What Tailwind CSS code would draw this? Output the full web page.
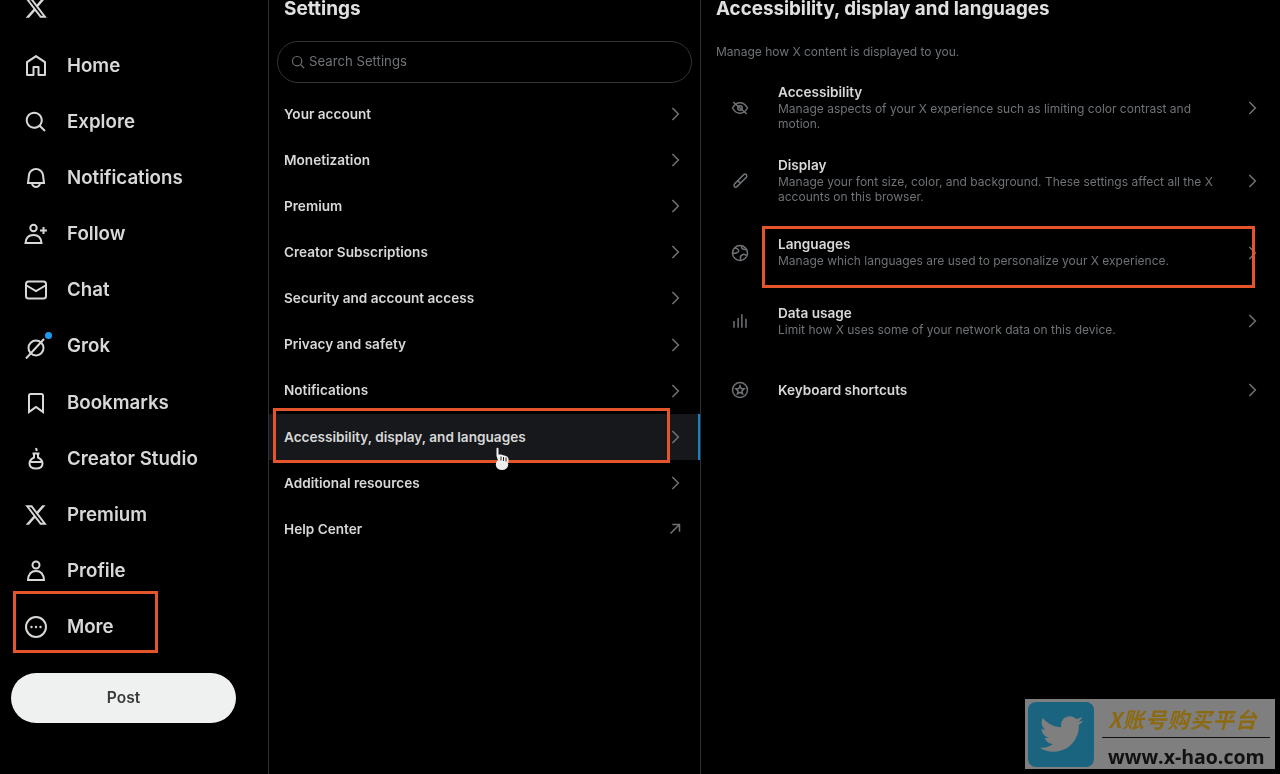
<!DOCTYPE html>
<html lang="en">
<head>
    <meta charset="UTF-8">
    <meta name="viewport" content="width=device-width, initial-scale=1.0">
    <title>Settings / X</title>
    <script src="https://cdn.jsdelivr.net/npm/@tailwindcss/browser@4"></script>
</head>
<body class="bg-black">
    <div class="relative flex h-[774px] w-[1280px] overflow-hidden bg-black font-['Inter','Liberation_Sans',sans-serif] text-[#d8d8d8]">

        <!-- left nav -->
        <aside class="flex w-[269px] shrink-0 flex-col border-r border-[#2f3336] pl-6 blur-[0.4px]">
            <div class="flex h-[38px] items-start">
                <svg class="-mt-[4px] h-6 w-6 fill-[#d8d8d8]" viewBox="0 0 24 24"><path d="M18.244 2.25h3.308l-7.227 8.26 8.502 11.24H16.17l-5.214-6.817L4.99 21.75H1.68l7.73-8.835L1.254 2.25H8.08l4.713 6.231zm-1.161 17.52h1.833L7.084 4.126H5.117z"/></svg>
            </div>
            <nav class="flex flex-col text-[18.7px] font-semibold">
                <a class="flex h-[56.1px] items-center gap-[19px]">
                    <svg class="h-6 w-6 fill-[#d8d8d8]" viewBox="0 0 24 24"><path d="M21.591 7.146L12.52 1.157c-.316-.21-.724-.21-1.04 0l-9.071 5.99c-.26.173-.409.456-.409.757v13.183c0 .502.418.913.929.913h6.638c.511 0 .929-.41.929-.913v-7.075h3.008v7.075c0 .502.418.913.929.913h6.639c.51 0 .928-.41.928-.913V7.904c0-.301-.158-.584-.408-.758zM20 20l-4.5.01.011-7.097c0-.502-.418-.913-.928-.913H9.44c-.511 0-.929.41-.929.913L8.5 20H4V8.773l8.011-5.342L20 8.773V20z"/></svg>
                    <span>Home</span>
                </a>
                <a class="flex h-[56.1px] items-center gap-[19px]">
                    <svg class="h-6 w-6 fill-[#d8d8d8]" viewBox="0 0 24 24"><path d="M10.25 3.75c-3.59 0-6.5 2.91-6.5 6.5s2.91 6.5 6.5 6.5c1.795 0 3.419-.726 4.596-1.904 1.178-1.177 1.904-2.801 1.904-4.596 0-3.59-2.91-6.5-6.5-6.5zm-8.5 6.5c0-4.694 3.806-8.5 8.5-8.5s8.5 3.806 8.5 8.5c0 1.986-.682 3.815-1.824 5.262l4.781 4.781-1.414 1.414-4.781-4.781c-1.447 1.142-3.276 1.824-5.262 1.824-4.694 0-8.5-3.806-8.5-8.5z"/></svg>
                    <span>Explore</span>
                </a>
                <a class="flex h-[56.1px] items-center gap-[19px]">
                    <svg class="h-6 w-6 fill-[#d8d8d8]" viewBox="0 0 24 24"><path d="M19.993 9.042C19.48 5.017 16.054 2 11.996 2s-7.49 3.021-7.999 7.051L2.866 18H7.1c.463 2.282 2.481 4 4.9 4s4.437-1.718 4.9-4h4.236l-1.143-8.958zM12 20c-1.306 0-2.417-.835-2.829-2h5.658c-.412 1.165-1.523 2-2.829 2zm-6.866-4l.847-6.698C6.364 6.272 8.941 4 11.996 4s5.627 2.268 6.013 5.295L18.864 16H5.134z"/></svg>
                    <span>Notifications</span>
                </a>
                <a class="flex h-[56.1px] items-center gap-[19px]">
                    <svg class="h-6 w-6 fill-none stroke-[#d8d8d8] stroke-2" viewBox="0 0 24 24"><circle cx="9.5" cy="6" r="3.2"/><path d="M1.5 21c.4-5 3.4-8 8-8s7.6 3 8 8z"/><path d="M19.5 5v7M16 8.5h7"/></svg>
                    <span>Follow</span>
                </a>
                <a class="flex h-[56.1px] items-center gap-[19px]">
                    <svg class="h-6 w-6 fill-none stroke-[#d8d8d8] stroke-2" viewBox="0 0 24 24"><rect x="2" y="3.5" width="20" height="17" rx="2.5"/><path d="M2.5 7.5L12 13l9.500-5.500"/></svg>
                    <span>Chat</span>
                </a>
                <a class="flex h-[56.1px] items-center gap-[19px]">
                    <span class="relative h-6 w-6">
                        <svg class="h-6 w-6 fill-none stroke-[#d8d8d8] stroke-2" viewBox="0 0 24 24"><circle cx="12" cy="13" r="7.500"/><path d="M2 23.500L20 4"/></svg>
                        <span class="absolute -top-[3px] left-[21px] h-[7px] w-[7px] rounded-full bg-[#1d9bf0]"></span>
                    </span>
                    <span>Grok</span>
                </a>
                <a class="flex h-[56.1px] items-center gap-[19px]">
                    <svg class="h-6 w-6 fill-[#d8d8d8]" viewBox="0 0 24 24"><path d="M4 4.500C4 3.120 5.119 2 6.500 2h11C18.881 2 20 3.120 20 4.500v18.440l-8-5.710-8 5.710V4.500zM6.500 4c-.276 0-.5.220-.5.500v14.560l6-4.290 6 4.290V4.500c0-.280-.224-.500-.500-.500h-11z"/></svg>
                    <span>Bookmarks</span>
                </a>
                <a class="flex h-[56.1px] items-center gap-[19px]">
                    <svg class="h-6 w-6 fill-none stroke-[#d8d8d8] stroke-2" viewBox="0 0 24 24"><path d="M8.500 6.500h7M10 6.500v4c-3 1.500-4.500 3.500-4.500 6 0 3.500 2.500 5 6.500 5s6.500-1.500 6.500-5c0-2.500-1.500-4.500-4.500-6v-4"/><path d="M6 15h12"/><path d="M12 1l.8 3"/></svg>
                    <span>Creator Studio</span>
                </a>
                <a class="flex h-[56.1px] items-center gap-[19px]">
                    <svg class="h-6 w-6 fill-[#d8d8d8]" viewBox="0 0 24 24"><path d="M18.244 2.250h3.308l-7.227 8.260 8.502 11.240H16.170l-5.214-6.817L4.990 21.750H1.680l7.730-8.835L1.254 2.250H8.080l4.713 6.231zm-1.161 17.520h1.833L7.084 4.126H5.117z"/></svg>
                    <span>Premium</span>
                </a>
                <a class="flex h-[56.1px] items-center gap-[19px]">
                    <svg class="h-6 w-6 fill-none stroke-[#d8d8d8] stroke-2" viewBox="0 0 24 24"><circle cx="12" cy="6" r="3.500"/><path d="M4 21c.4-5.500 3.400-9 8-9s7.600 3.500 8 9z"/></svg>
                    <span>Profile</span>
                </a>
                <a class="flex h-[56.1px] items-center gap-[19px]">
                    <svg class="h-6 w-6 fill-none stroke-[#d8d8d8] stroke-2" viewBox="0 0 24 24"><circle cx="12" cy="12" r="10"/><circle class="fill-[#d8d8d8] stroke-0" cx="7.500" cy="12" r="1.200"/><circle class="fill-[#d8d8d8] stroke-0" cx="12" cy="12" r="1.200"/><circle class="fill-[#d8d8d8] stroke-0" cx="16.500" cy="12" r="1.200"/></svg>
                    <span>More</span>
                </a>
            </nav>
            <button class="mt-[18px] -ml-[13px] flex h-[50px] w-[225px] items-center justify-center rounded-full bg-[#eff1f1] text-[15.5px] font-semibold text-[#3a3a3a]">Post</button>
        </aside>

        <!-- settings list -->
        <section class="flex w-[432px] shrink-0 flex-col border-r border-[#2f3336] blur-[0.4px]">
            <h1 class="-mt-[3px] h-6 pl-[15px] text-[19px] leading-6 font-bold text-[#e0e0e0]">Settings</h1>
            <div class="mt-5 ml-2 flex h-[42px] w-[415px] items-center gap-[4px] rounded-full border border-[#2f3336] pl-[13px] text-[13.2px] text-[#6f7377]">
                <svg class="h-[14px] w-[14px] fill-none stroke-[#6f7377] stroke-2" viewBox="0 0 24 24"><circle cx="10.500" cy="10.500" r="8"/><path d="M16.500 16.500l6 6"/></svg>
                <span>Search Settings</span>
            </div>
            <ul class="mt-2 flex flex-col text-[13.6px] font-semibold">
                <li class="flex h-[46.1px] items-center justify-between pr-[16px] pl-[15px]">
                    <span>Your account</span>
                    <svg class="h-[18px] w-[18px] fill-none stroke-[#6f7377] stroke-2" viewBox="0 0 24 24"><path d="M8.500 4l8 8-8 8"/></svg>
                </li>
                <li class="flex h-[46.1px] items-center justify-between pr-[16px] pl-[15px]">
                    <span>Monetization</span>
                    <svg class="h-[18px] w-[18px] fill-none stroke-[#6f7377] stroke-2" viewBox="0 0 24 24"><path d="M8.500 4l8 8-8 8"/></svg>
                </li>
                <li class="flex h-[46.1px] items-center justify-between pr-[16px] pl-[15px]">
                    <span>Premium</span>
                    <svg class="h-[18px] w-[18px] fill-none stroke-[#6f7377] stroke-2" viewBox="0 0 24 24"><path d="M8.500 4l8 8-8 8"/></svg>
                </li>
                <li class="flex h-[46.1px] items-center justify-between pr-[16px] pl-[15px]">
                    <span>Creator Subscriptions</span>
                    <svg class="h-[18px] w-[18px] fill-none stroke-[#6f7377] stroke-2" viewBox="0 0 24 24"><path d="M8.500 4l8 8-8 8"/></svg>
                </li>
                <li class="flex h-[46.1px] items-center justify-between pr-[16px] pl-[15px]">
                    <span>Security and account access</span>
                    <svg class="h-[18px] w-[18px] fill-none stroke-[#6f7377] stroke-2" viewBox="0 0 24 24"><path d="M8.500 4l8 8-8 8"/></svg>
                </li>
                <li class="flex h-[46.1px] items-center justify-between pr-[16px] pl-[15px]">
                    <span>Privacy and safety</span>
                    <svg class="h-[18px] w-[18px] fill-none stroke-[#6f7377] stroke-2" viewBox="0 0 24 24"><path d="M8.500 4l8 8-8 8"/></svg>
                </li>
                <li class="flex h-[46.1px] items-center justify-between pr-[16px] pl-[15px]">
                    <span>Notifications</span>
                    <svg class="h-[18px] w-[18px] fill-none stroke-[#6f7377] stroke-2" viewBox="0 0 24 24"><path d="M8.500 4l8 8-8 8"/></svg>
                </li>
                <li class="flex h-[46.1px] items-center justify-between border-r-2 border-[#1d7fc4] bg-[#16181c] pr-[14px] pl-[15px]">
                    <span>Accessibility, display, and languages</span>
                    <svg class="h-[18px] w-[18px] fill-none stroke-[#6f7377] stroke-2" viewBox="0 0 24 24"><path d="M8.500 4l8 8-8 8"/></svg>
                </li>
                <li class="flex h-[46.1px] items-center justify-between pr-[16px] pl-[15px]">
                    <span>Additional resources</span>
                    <svg class="h-[18px] w-[18px] fill-none stroke-[#6f7377] stroke-2" viewBox="0 0 24 24"><path d="M8.500 4l8 8-8 8"/></svg>
                </li>
                <li class="flex h-[46.1px] items-center justify-between pr-[16px] pl-[15px]">
                    <span>Help Center</span>
                    <svg class="h-[18px] w-[18px] fill-none stroke-[#6f7377] stroke-2" viewBox="0 0 24 24"><path d="M6 18L18 6M8.500 6H18v9.500"/></svg>
                </li>
            </ul>
        </section>

        <!-- detail pane -->
        <section class="flex flex-1 flex-col blur-[0.4px]">
            <h2 class="-mt-[3px] h-6 pl-[15px] text-[18.8px] leading-6 font-bold text-[#e0e0e0]">Accessibility, display and languages</h2>
            <p class="mt-[23px] h-4 pl-[15px] text-[12px] leading-4 text-[#6f7377]">Manage how X content is displayed to you.</p>
            <div class="mt-[12px] flex flex-col">
                <div class="flex h-[72px] items-center pr-[19px] pl-[30px]">
                    <svg class="h-[18px] w-[18px] shrink-0 fill-none stroke-[#6f7377] stroke-2" viewBox="0 0 24 24"><path d="M2 12c2.500-4.500 6-7 10-7s7.500 2.500 10 7c-2.500 4.500-6 7-10 7s-7.500-2.500-10-7z"/><circle cx="12" cy="12" r="3"/><path d="M3 4l18 16"/></svg>
                    <div class="ml-[29px] flex-1 pb-[2px]">
                        <div class="text-[13.6px] leading-[18px] font-semibold">Accessibility</div>
                        <div class="w-[440px] text-[12px] leading-[15px] text-[#6f7377]">Manage aspects of your X experience such as limiting color contrast and motion.</div>
                    </div>
                    <svg class="h-[18px] w-[18px] shrink-0 fill-none stroke-[#6f7377] stroke-2" viewBox="0 0 24 24"><path d="M8.500 4l8 8-8 8"/></svg>
                </div>
                <div class="flex h-[74px] items-center pr-[19px] pl-[30px]">
                    <svg class="h-[18px] w-[18px] shrink-0 fill-none stroke-[#6f7377] stroke-2" viewBox="0 0 24 24"><path d="M20.500 3.500c-1-1-2.500-1-3.500 0L5 15.500c-1 1-1 3-.5 4s2.500 1 3.500 0l12.500-12.500c1-1 .5-2.500 0-3.500z"/><path d="M9 11.500l3.500 3.500"/></svg>
                    <div class="ml-[29px] flex-1 pb-[2px]">
                        <div class="text-[13.6px] leading-[18px] font-semibold">Display</div>
                        <div class="w-[440px] text-[12px] leading-[15px] text-[#6f7377]">Manage your font size, color, and background. These settings affect all the X accounts on this browser.</div>
                    </div>
                    <svg class="h-[18px] w-[18px] shrink-0 fill-none stroke-[#6f7377] stroke-2" viewBox="0 0 24 24"><path d="M8.500 4l8 8-8 8"/></svg>
                </div>
                <div class="flex h-[70px] items-center pr-[19px] pl-[30px]">
                    <svg class="h-[18px] w-[18px] shrink-0 fill-none stroke-[#6f7377] stroke-2" viewBox="0 0 24 24"><circle cx="12" cy="12" r="10"/><path d="M5 5c2 1 4 1 5 3s-1 3-3 4-3 0-5 0M14 3c0 3 1 4 3 4s3 0 4 1M13 21c-1-3 0-6 3-7s3 1 5 1"/></svg>
                    <div class="ml-[29px] flex-1 pb-[3px]">
                        <div class="text-[13.6px] leading-[18px] font-semibold">Languages</div>
                        <div class="text-[12px] leading-[15px] text-[#6f7377]">Manage which languages are used to personalize your X experience.</div>
                    </div>
                    <svg class="h-[18px] w-[18px] shrink-0 fill-none stroke-[#6f7377] stroke-2" viewBox="0 0 24 24"><path d="M8.500 4l8 8-8 8"/></svg>
                </div>
                <div class="flex h-[66px] items-center pr-[19px] pl-[30px]">
                    <svg class="h-[18px] w-[18px] shrink-0 fill-none stroke-[#6f7377] stroke-2" viewBox="0 0 24 24"><path d="M4 12v9M9.500 8v13M14.500 3v18M20 9v12"/></svg>
                    <div class="ml-[29px] flex-1 pb-[1px]">
                        <div class="text-[13.6px] leading-[18px] font-semibold">Data usage</div>
                        <div class="text-[12px] leading-[15px] text-[#6f7377]">Limit how X uses some of your network data on this device.</div>
                    </div>
                    <svg class="h-[18px] w-[18px] shrink-0 fill-none stroke-[#6f7377] stroke-2" viewBox="0 0 24 24"><path d="M8.500 4l8 8-8 8"/></svg>
                </div>
                <div class="flex h-[72px] items-center pr-[19px] pl-[30px]">
                    <svg class="h-[18px] w-[18px] shrink-0 fill-none stroke-[#6f7377] stroke-2" viewBox="0 0 24 24"><circle cx="12" cy="12" r="10"/><path d="M12 6.500l1.600 3.600 3.900.400-2.900 2.600.800 3.900-3.400-2-3.400 2 .800-3.900-2.900-2.600 3.900-.400z"/></svg>
                    <div class="ml-[29px] flex-1 text-[13.6px] font-semibold">Keyboard shortcuts</div>
                    <svg class="h-[18px] w-[18px] shrink-0 fill-none stroke-[#6f7377] stroke-2" viewBox="0 0 24 24"><path d="M8.500 4l8 8-8 8"/></svg>
                </div>
            </div>
        </section>

        <!-- annotation boxes -->
        <div class="absolute top-[591px] left-[13px] h-[62px] w-[145px] border-[3px] border-[#e5552b]"></div>
        <div class="absolute top-[408px] left-[273px] h-[55px] w-[397px] border-[3px] border-[#e5552b]"></div>
        <div class="absolute top-[226px] left-[762px] h-[62px] w-[493px] border-[3px] border-[#e5552b]"></div>

        <!-- hand cursor -->
        <svg class="absolute top-[447px] left-[494px] h-[24px] w-[16px]" viewBox="0 0 16 24"><ellipse cx="8" cy="17.500" rx="6.200" ry="5.500" fill="#ececec"/><path d="M2.500 1.500C2.500.5 4.500.5 4.500 1.500V7.500L7 7.500 9.500 8.200 12 9c1.500.6 2.500 1.500 2.500 3v3.500H5L3.500 12 2.500 9z" fill="#f2f2f2"/><path d="M7 9.500v4M9.500 10v4M12 10.500v4" stroke="#222" stroke-width="1"/></svg>

        <!-- watermark -->
        <div class="absolute top-[699px] left-[1025px] flex h-[70px] w-[250px] items-center gap-[8px] bg-[#7f7f7f] pl-[3px] blur-[0.4px]">
            <div class="flex h-[65px] w-[66px] shrink-0 items-center justify-center rounded-[8px] bg-[#1a6480]">
                <svg class="h-[46px] w-[46px] fill-[#7f7f7f]" viewBox="0 0 24 24"><path d="M23.643 4.937c-.835.370-1.732.620-2.675.733.962-.576 1.700-1.490 2.048-2.578-.900.534-1.897.922-2.958 1.130-.850-.904-2.060-1.470-3.400-1.470-2.572 0-4.658 2.086-4.658 4.660 0 .364.042.718.120 1.060-3.873-.195-7.304-2.050-9.602-4.868-.400.690-.630 1.490-.630 2.342 0 1.616.823 3.043 2.072 3.878-.764-.025-1.482-.234-2.112-.583v.060c0 2.257 1.605 4.140 3.737 4.568-.392.106-.803.162-1.227.162-.300 0-.593-.028-.877-.082.593 1.850 2.313 3.198 4.352 3.234-1.595 1.250-3.604 1.995-5.786 1.995-.376 0-.747-.022-1.112-.065 2.062 1.323 4.510 2.093 7.140 2.093 8.570 0 13.255-7.098 13.255-13.254 0-.200-.005-.402-.014-.602.910-.658 1.700-1.477 2.323-2.410z"/></svg>
            </div>
            <div class="flex w-[168px] shrink-0 flex-col">
                <div class="h-[38px] pl-[6px] text-[21.5px] leading-[40px] font-bold tracking-[1px] whitespace-nowrap text-[#8c6a12] italic font-['Noto_Sans_CJK_SC',sans-serif]">X账号购买平台</div>
                <div class="h-[1px] bg-[#111]"></div>
                <div class="h-[31px] pl-[6px] text-[19.5px] leading-[37px] font-bold whitespace-nowrap text-[#111] font-['Open_Sans',sans-serif]">www.x-hao.com</div>
            </div>
        </div>
    </div>
</body>
</html>
